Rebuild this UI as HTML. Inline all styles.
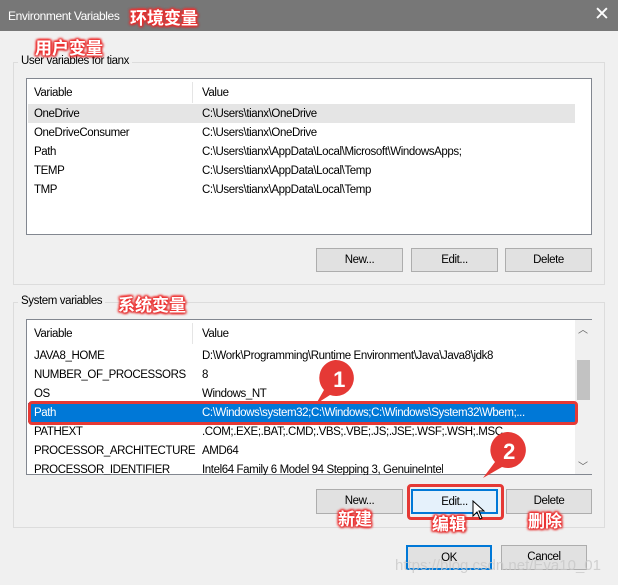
<!DOCTYPE html>
<html><head><meta charset="utf-8"><style>
*{box-sizing:border-box;margin:0;padding:0}
body{width:618px;height:585px;background:#f0f0f0;font-family:"Liberation Sans","Noto Sans CJK SC",sans-serif;font-size:11.5px;letter-spacing:-0.4px;color:#000;position:relative;overflow:hidden}
.a{position:absolute}
.title{left:0;top:0;width:618px;height:31px;background:#777;color:#fff;font-size:12px}
.grp{border:1px solid #dcdcdc}
.lbl{background:#f0f0f0;padding:0 3px}
.list{background:#fff;border:1px solid #828790}
.row{position:absolute;left:7px;height:19px;line-height:21px;white-space:nowrap}
.btn{background:#e1e1e1;border:1px solid #adadad;text-align:center;line-height:23px}
.cn{z-index:5;color:#fff;font-weight:bold;font-size:17px;letter-spacing:0;text-shadow:0 0 2px #e33,0 0 3px #e33,0 0 3px #e33,1px 1px 2px #c22,-1px -1px 2px #e33,1px -1px 2px #e33,-1px 1px 2px #e33}
</style></head><body>
<div class="a title"><span class="a" style="left:8px;top:9px">Environment Variables</span>
<span class="a cn" style="left:130px;top:4px">环境变量</span>
<span class="a" style="left:594px;top:3px;font-size:19px;font-weight:300">✕</span></div>
<span class="a cn" style="left:35px;top:34px">用户变量</span>

<div class="a grp" style="left:13px;top:62px;width:592px;height:223px"></div>
<span class="a lbl" style="left:18px;top:55px">User variables for tianx</span>
<div class="a list" style="left:26px;top:78px;width:566px;height:157px">
<div class="a" style="left:165px;top:3px;width:1px;height:21px;background:#e5e5e5"></div>
<div class="a" style="left:1px;top:25px;width:547px;height:19px;background:#e5e5e5"></div>
<div class="row" style="top:4px">Variable</div><div class="row" style="top:4px;left:175px">Value</div>
<div class="row" style="top:25px">OneDrive</div><div class="row" style="top:25px;left:175px">C:\Users\tianx\OneDrive</div>
<div class="row" style="top:44px">OneDriveConsumer</div><div class="row" style="top:44px;left:175px">C:\Users\tianx\OneDrive</div>
<div class="row" style="top:63px">Path</div><div class="row" style="top:63px;left:175px">C:\Users\tianx\AppData\Local\Microsoft\WindowsApps;</div>
<div class="row" style="top:82px">TEMP</div><div class="row" style="top:82px;left:175px">C:\Users\tianx\AppData\Local\Temp</div>
<div class="row" style="top:101px">TMP</div><div class="row" style="top:101px;left:175px">C:\Users\tianx\AppData\Local\Temp</div>
</div>
<div class="a btn" style="left:316px;top:248px;width:87px;height:24px">New...</div>
<div class="a btn" style="left:411px;top:248px;width:87px;height:24px">Edit...</div>
<div class="a btn" style="left:505px;top:248px;width:87px;height:24px">Delete</div>

<div class="a grp" style="left:13px;top:302px;width:592px;height:226px"></div>
<span class="a lbl" style="left:18px;top:295px">System variables</span>
<span class="a cn" style="left:118px;top:291px">系统变量</span>
<div class="a list" style="left:26px;top:319px;width:566px;height:156px">
<div class="a" style="left:165px;top:3px;width:1px;height:21px;background:#e5e5e5"></div>
<div class="row" style="top:4px">Variable</div><div class="row" style="top:4px;left:175px">Value</div>
<div class="row" style="top:26px">JAVA8_HOME</div><div class="row" style="top:26px;left:175px">D:\Work\Programming\Runtime Environment\Java\Java8\jdk8</div>
<div class="row" style="top:45px">NUMBER_OF_PROCESSORS</div><div class="row" style="top:45px;left:175px">8</div>
<div class="row" style="top:64px">OS</div><div class="row" style="top:64px;left:175px">Windows_NT</div>
<div class="a" style="left:1px;top:83px;width:547px;height:19px;background:#0078d7"></div>
<div class="row" style="top:83px;color:#fff">Path</div><div class="row" style="top:83px;left:175px;color:#fff">C:\Windows\system32;C:\Windows;C:\Windows\System32\Wbem;...</div>
<div class="row" style="top:102px">PATHEXT</div><div class="row" style="top:102px;left:175px">.COM;.EXE;.BAT;.CMD;.VBS;.VBE;.JS;.JSE;.WSF;.WSH;.MSC</div>
<div class="row" style="top:121px">PROCESSOR_ARCHITECTURE</div><div class="row" style="top:121px;left:175px">AMD64</div>
<div class="row" style="top:140px;height:15px;overflow:hidden">PROCESSOR_IDENTIFIER</div><div class="row" style="top:140px;left:175px;height:15px;overflow:hidden">Intel64 Family 6 Model 94 Stepping 3, GenuineIntel</div>
<div class="a" style="left:548px;top:0;width:17px;height:154px;background:#f0f0f0"></div>
<div class="a" style="left:550px;top:40px;width:13px;height:40px;background:#c2c2c2"></div>
<div class="a" style="left:551px;top:1px;font-size:10px;color:#606060">︿</div>
<div class="a" style="left:551px;top:138px;font-size:10px;color:#606060">﹀</div>
</div>
<div class="a" style="left:28px;top:401px;width:550px;height:24px;border:3px solid #e53935;border-radius:4px"></div>

<div class="a btn" style="left:316px;top:489px;width:87px;height:25px">New...</div>
<div class="a btn" style="left:411px;top:489px;width:87px;height:25px;background:#e5f1fb;border:2px solid #0078d7">Edit...</div>
<div class="a" style="left:407px;top:484px;width:97px;height:36px;border:3px solid #e53935;border-radius:4px"></div>
<div class="a btn" style="left:506px;top:489px;width:86px;height:25px">Delete</div>
<span class="a cn" style="left:338px;top:505px">新建</span>
<span class="a cn" style="left:432px;top:510px">编辑</span>
<span class="a cn" style="left:528px;top:507px">删除</span>
<svg class="a" style="left:472px;top:500px" width="14" height="20" viewBox="0 0 14 20"><path d="M1 1 L1 16 L5 12 L8 19 L10 18 L7 11 L12 11 Z" fill="#fff" stroke="#000"/></svg>

<svg class="a" style="left:310px;top:358px" width="50" height="50" viewBox="0 0 50 50"><path d="M25 2 A18 18 0 1 1 20 37 L6 46 L14 32 A18 18 0 0 1 25 2Z" fill="#e53935"/><text x="29" y="29" font-family="Liberation Sans" font-weight="bold" font-size="22" fill="#fff" text-anchor="middle">1</text></svg>
<svg class="a" style="left:480px;top:430px" width="50" height="50" viewBox="0 0 50 50"><path d="M27 2 A18 18 0 1 1 22 37 L3 48 L15 32 A18 18 0 0 1 27 2Z" fill="#e53935"/><text x="29" y="29" font-family="Liberation Sans" font-weight="bold" font-size="22" fill="#fff" text-anchor="middle">2</text></svg>

<div class="a btn" style="left:406px;top:545px;width:86px;height:25px;border:2px solid #0078d7">OK</div>
<div class="a btn" style="left:501px;top:545px;width:86px;height:25px">Cancel</div>
<span class="a" style="left:395px;top:557px;color:rgba(200,200,200,0.8);font-size:15px;letter-spacing:0">https://blog.csdn.net/Eva10_01</span>
</body></html>
